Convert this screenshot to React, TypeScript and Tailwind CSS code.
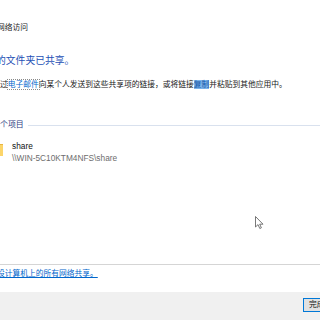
const font = "font-['Liberation_Sans','Noto_Sans_CJK_SC',sans-serif]";

function FolderIcon() {
  return (
    <svg width="16" height="15" viewBox="0 0 16 15" className="-ml-[13px] shrink-0">
      <path d="M0 1h6l2 2h8v12H0z" fill="#e8b640" />
      <path d="M0 4h16v11H0z" fill="#fcd56a" />
    </svg>
  );
}

function Cursor() {
  return (
    <svg
      width="9"
      height="14"
      viewBox="0 0 9 14"
      className="absolute left-[255px] top-[216px]"
    >
      <path
        d="M0.5 0.5 L0.5 11 L3 8.6 L4.8 12.5 L6.4 11.8 L4.7 8.2 L8 8.2 Z"
        fill="#fff"
        stroke="#555"
        strokeWidth="0.8"
        strokeLinejoin="round"
      />
    </svg>
  );
}

export default function App() {
  return (
    <div className={`relative w-[320px] h-[320px] overflow-hidden bg-white ${font} text-[#1a1a1a]`}>
      <div className="h-[264px] flex flex-col">
        {/* Title */}
        <p className="mt-[23px] -ml-[3px] text-[7.75px] leading-[10px] whitespace-nowrap">
          网络访问
        </p>

        {/* Main instruction */}
        <h1 className="mt-[22px] -ml-[4px] text-[9.8px] leading-[12px] text-[#1d4fb5] whitespace-nowrap">
          的文件夹已共享。
        </h1>

        {/* Description */}
        <p className="mt-[13px] text-[7.75px] leading-[10px] whitespace-nowrap">
          过
          <span className="text-[#0066cc] outline outline-1 outline-dotted outline-[#8a8a8a]">
            电子邮件
          </span>
          向某个人发送到这些共享项的链接，或将链接
          <span className="bg-[#7db4ea] text-[#1456a8]">复制</span>
          并粘贴到其他应用中。
        </p>

        {/* Group header */}
        <div className="mt-[30px] flex items-center gap-[4px]">
          <span className="text-[7.9px] leading-[10px] text-[#2b3a80] whitespace-nowrap">
            个项目
          </span>
          <div className="flex-1 h-px bg-[#d9e1ee]" />
        </div>

        {/* Item */}
        <div className="mt-[11px] flex items-start gap-[9px]">
          <FolderIcon />
          <div className="flex flex-col">
            <span className="text-[8.3px] leading-[10px] text-[#111]">share</span>
            <span className="mt-[2px] text-[8.3px] leading-[10px] text-[#6d6d6d] whitespace-nowrap">
              \\WIN-5C10KTM4NFS\share
            </span>
          </div>
        </div>
      </div>

      {/* Link area */}
      <div className="h-[28px] border-t border-[#d5d5d5] pt-[4px]">
        <a className="block -ml-[3px] text-[7.75px] leading-[10px] text-[#0066cc] underline whitespace-nowrap">
          设计算机上的所有网络共享。
        </a>
      </div>

      {/* Footer */}
      <div className="h-[28px] bg-[#f0f0f0] flex items-start pt-[6px]">
        <button className="ml-[303px] shrink-0 w-[75px] h-[14px] border-[1.5px] border-[#0078d7] bg-[#e1e1e1] text-[7.75px] leading-[10px] text-[#111] text-left pl-[5px]">
          完成
        </button>
      </div>

      <Cursor />
    </div>
  );
}
